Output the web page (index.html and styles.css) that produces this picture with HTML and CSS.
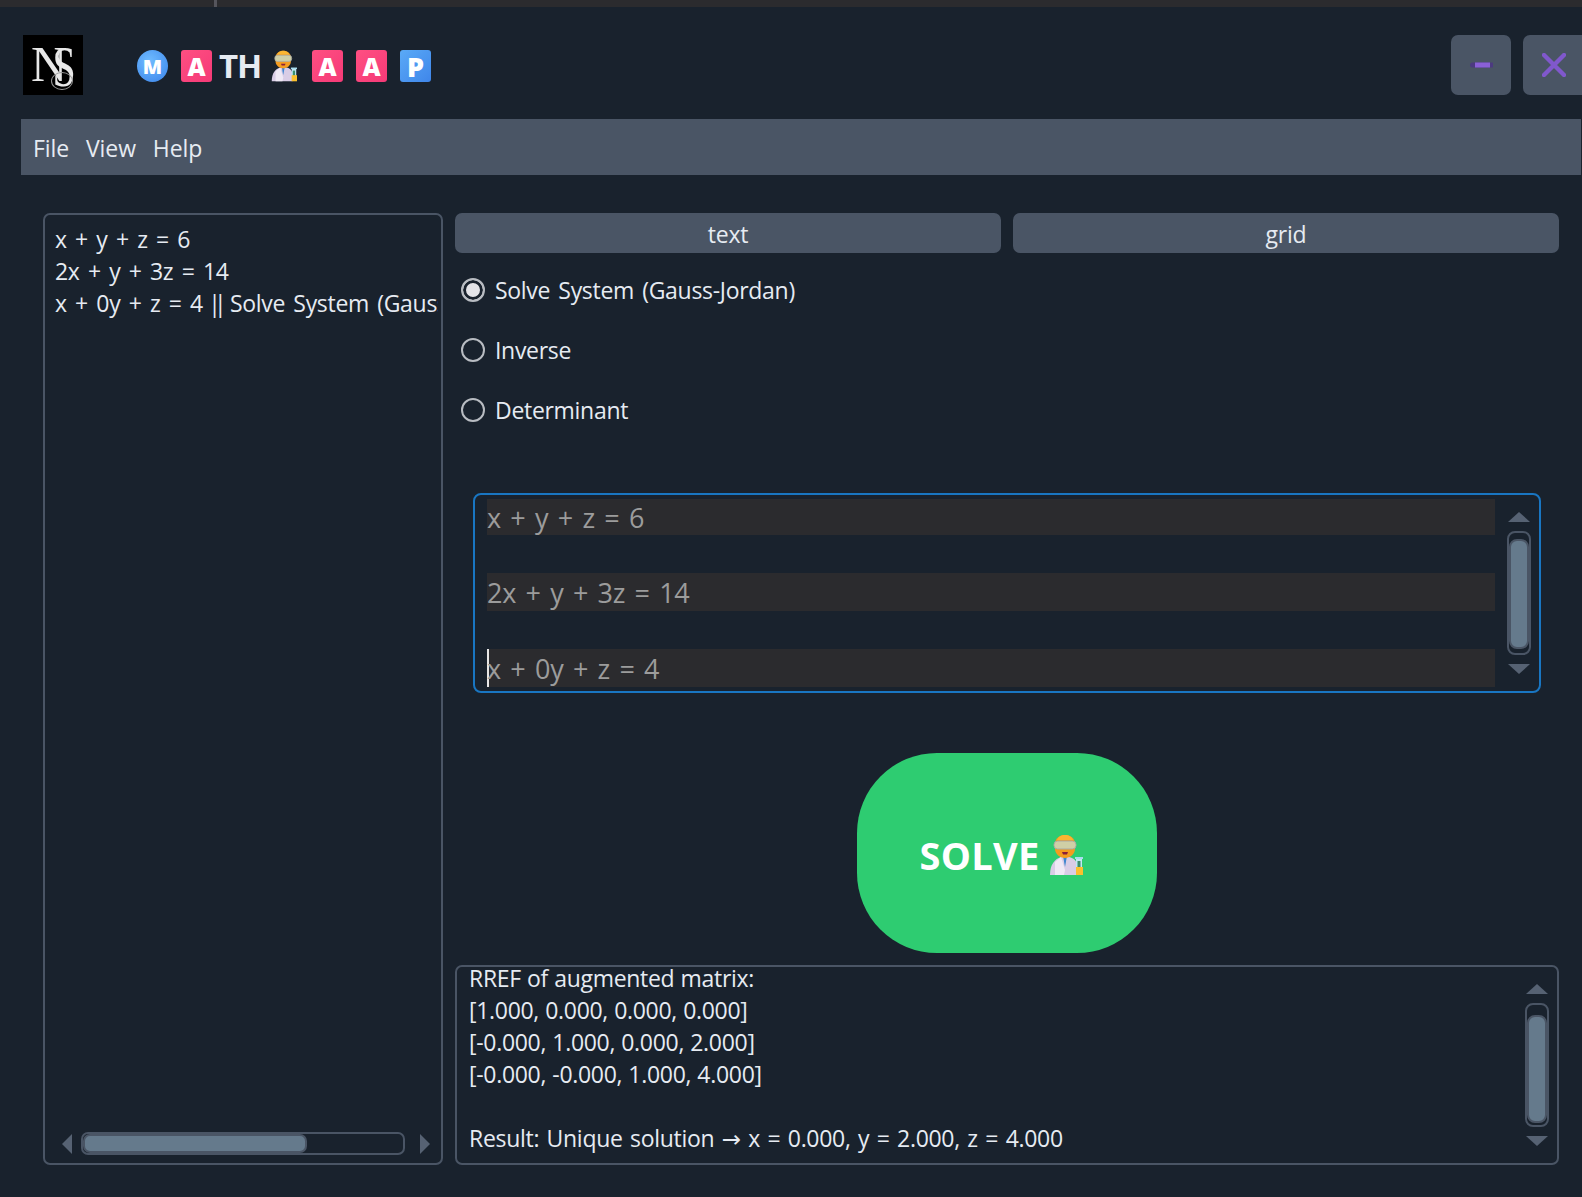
FILE: index.html
```html
<!DOCTYPE html>
<html lang="en">
<head>
  <meta charset="UTF-8"/>
  <title>Math App</title>
  <link rel="stylesheet" href="styles.css">
</head>
<body>

  <!-- shared scientist emoji -->
  <svg class="defs" width="0" height="0">
    <symbol id="scientist" viewBox="0 0 34 40">
      <path d="M1 40 C1 29 6 24 12 22 L20 22 C25 23 28 26 28 31 L28 40 Z" fill="#d9cde6"/>
      <path d="M12 22 L16 35 L15 40 L6 40 L6 27 Z" fill="#efe9f5"/>
      <path d="M14 21 L16 32 L18 21 Z" fill="#3f86cf"/>
      <path d="M6 9 C6 3 11 0 16 0 C21 0 26 3 26 9 L26 14 C26 19 21 23 16 23 C11 23 6 19 6 14 Z" fill="#f59c1f"/>
      <path d="M8 5 C9 2 12 0 16 0 C20 0 23 2 24 5 Z" fill="#fbb531"/>
      <rect x="5" y="6" width="22" height="8" rx="3.5" fill="#cfcfa6" stroke="#a9a9a2"/>
      <path d="M13 17 L19 17 L18 19.5 L14 19.5 Z" fill="#8c1f3a"/>
      <rect x="27" y="23" width="6" height="12" fill="#bfe7f3"/>
      <rect x="28.5" y="26" width="3" height="7" fill="#3d8f6e"/>
      <rect x="26" y="22" width="8" height="2" fill="#a9dcef"/>
      <rect x="27" y="32" width="7" height="8" fill="#fbc02d"/>
    </symbol>
  </svg>

  <div class="top-strip"><span class="tick"></span></div>

  <header class="title-bar">
    <div class="logo">
      <span class="logo-n">N</span><span class="logo-s">S</span><span class="logo-loop"></span>
    </div>
    <div class="app-name">
      <span class="tile tile-round">M</span>
      <span class="tile tile-pink">A</span>
      <span class="plain">TH</span>
      <svg class="scientist"><use href="#scientist"/></svg>
      <span class="tile tile-pink">A</span>
      <span class="tile tile-pink">A</span>
      <span class="tile tile-blue">P</span>
    </div>
    <div class="window-btns">
      <button class="win-btn">
        <svg viewBox="0 0 24 24" width="24" height="24">
          <path d="M3.5 12 H22.5" stroke="#4c3a80" stroke-width="5" stroke-linecap="round"/>
          <path d="M6 12 H21" stroke="#8a60d6" stroke-width="5"/>
        </svg>
      </button>
      <button class="win-btn win-close">
        <svg viewBox="0 0 24 24" width="24" height="24"><path d="M2 2 L22 22 M22 2 L2 22" stroke="#8058cc" stroke-width="4.4" stroke-linecap="round"/></svg>
      </button>
    </div>
  </header>

  <nav class="menu-bar">
    <a>File</a>
    <a>View</a>
    <a>Help</a>
  </nav>

  <main class="content">
    <section class="history">
      <div class="history-text">
        <p>x + y + z = 6</p>
        <p>2x + y + 3z = 14</p>
        <p>x + 0y + z = 4 <span class="pipes">||</span> <span class="history-mode">Solve System (Gauss-Jordan)</span></p>
      </div>
      <div class="hscroll">
        <span class="arrow arrow-left"></span>
        <div class="htrack"><div class="hthumb"></div></div>
        <span class="arrow arrow-right"></span>
      </div>
    </section>

    <section class="workspace">
      <div class="tabs">
        <button class="tab">text</button>
        <button class="tab">grid</button>
      </div>

      <div class="modes">
        <label class="mode"><span class="radio radio-on"></span>Solve System (Gauss-Jordan)</label>
        <label class="mode"><span class="radio"></span>Inverse</label>
        <label class="mode"><span class="radio"></span>Determinant</label>
      </div>

      <div class="editor">
        <div class="editor-lines">
          <div class="line line-first">x + y + z = 6</div>
          <div class="line">2x + y + 3z = 14</div>
          <div class="line line-caret">x + 0y + z = 4</div>
        </div>
        <div class="vscroll">
          <span class="arrow arrow-up"></span>
          <div class="vtrack"><div class="vthumb"></div></div>
          <span class="arrow arrow-down"></span>
        </div>
      </div>

      <button class="solve-btn">SOLVE
        <svg class="scientist-big"><use href="#scientist"/></svg>
      </button>

      <div class="output">
        <div class="output-text">
          <p>RREF of augmented matrix:</p>
          <p>[1.000, 0.000, 0.000, 0.000]</p>
          <p>[-0.000, 1.000, 0.000, 2.000]</p>
          <p>[-0.000, -0.000, 1.000, 4.000]</p>
          <p>&nbsp;</p>
          <p class="result">Result: Unique solution <span class="arrow-glyph">→</span> x = 0.000, y = 2.000, z = 4.000</p>
        </div>
        <div class="vscroll vscroll-output">
          <span class="arrow arrow-up"></span>
          <div class="vtrack"><div class="vthumb"></div></div>
          <span class="arrow arrow-down"></span>
        </div>
      </div>
    </section>
  </main>

</body>
</html>
```
FILE: styles.css
```css
* {
  margin: 0; padding: 0;
  box-sizing: border-box;
  font-family: 'Open Sans', 'Noto Sans', sans-serif;
}

html, body {
  width: 1582px;
  height: 1197px;
  overflow: hidden;
}

body {
  background: #19222d;
  color: #e6ebf2;
}

.defs {
  position: absolute;
}

.top-strip {
  height: 7px;
  background: #2b2b2e;
  padding-left: 214px;
}

.tick {
  display: block;
  width: 3px;
  height: 7px;
  background: #55555c;
}

/* title bar */
.title-bar {
  height: 112px;
  padding: 28px 0 0 23px;
  display: flex;
  align-items: flex-start;
}

.logo {
  width: 60px;
  height: 60px;
  background: #000;
  color: #e8e8e8;
  position: relative;
  overflow: hidden;
}

.logo-n, .logo-s {
  position: absolute;
  font-family: 'Liberation Serif', serif;
}

.logo-n {
  left: 8px;
  top: 3px;
  font-size: 50px;
  line-height: 52px;
}

.logo-s {
  left: 25px;
  top: 4px;
  font-size: 58px;
  line-height: 56px;
  transform: scaleX(0.72);
}

.logo-loop {
  position: absolute;
  left: 28px;
  top: 37px;
  width: 22px;
  height: 18px;
  border: 1px solid #999;
  border-radius: 50%;
}

.app-name {
  display: flex;
  align-items: center;
  margin: 15px 0 0 54px;
  height: 32px;
}

.tile {
  width: 31px;
  height: 32px;
  margin-right: 13px;
  flex-shrink: 0;
  display: flex;
  align-items: center;
  justify-content: center;
  color: #fff;
  font-weight: 800;
  font-size: 25px;
  border-radius: 3px;
}

.tile-round {
  border-radius: 50%;
  background: radial-gradient(circle at 40% 35%, #6fbcff, #3a83ea);
  font-size: 20px;
}

.tile-pink {
  background: linear-gradient(135deg, #ff4f82, #f53a77);
}

.tile-blue {
  background: linear-gradient(135deg, #5aaaf7, #3f86ea);
  font-size: 27px;
  margin-right: 0;
}

.plain {
  font-size: 33px;
  font-weight: 700;
  width: 41px;
  flex-shrink: 0;
  margin: 0 11px 0 -6px;
  line-height: 32px;
  letter-spacing: -1px;
  white-space: nowrap;
}

.scientist {
  width: 26px;
  height: 32px;
  flex-shrink: 0;
  margin-right: 15px;
}

.window-btns {
  margin-left: auto;
  display: flex;
  gap: 12px;
}

.win-btn {
  width: 60px;
  height: 60px;
  background: #4a5565;
  border: none;
  border-radius: 7px;
  display: flex;
  align-items: center;
  justify-content: center;
}

.win-close {
  width: 59px;
  padding-left: 3px;
  border-radius: 7px 0 0 7px;
}

/* menu */
.menu-bar {
  margin: 0 1px 0 21px;
  height: 56px;
  background: #4a5565;
  display: flex;
  align-items: center;
  padding: 2px 0 0 12px;
  gap: 17px;
}

.menu-bar a {
  font-size: 23px;
  letter-spacing: -0.1px;
}

/* main */
.content {
  display: flex;
  gap: 12px;
  padding: 38px 23px 0 43px;
}

.history {
  width: 400px;
  height: 952px;
  border: 2px solid #4a5565;
  border-radius: 7px;
  display: flex;
  flex-direction: column;
  padding: 8px 3px 0 10px;
}

.history-text {
  flex: 1;
  overflow: hidden;
  white-space: nowrap;
  font-size: 23px;
  line-height: 32px;
  letter-spacing: -0.3px;
  word-spacing: 2.7px;
}

.pipes {
  letter-spacing: -7px;
  margin: 0 2px 0 -3px;
}

.history-mode {
  letter-spacing: -0.3px;
  word-spacing: 2.5px;
}

.hscroll {
  display: flex;
  align-items: center;
  height: 23px;
  margin: 0 0 8px 7px;
}

.arrow {
  display: block;
  width: 0;
  height: 0;
  border-style: solid;
  border-color: transparent;
}

.arrow-left {
  border-width: 10px 10px 10px 0;
  border-right-color: #566273;
  margin-right: 9px;
}

.arrow-right {
  border-width: 10px 0 10px 10px;
  border-left-color: #566273;
  margin-left: 15px;
}

.htrack {
  width: 324px;
  height: 23px;
  border: 2px solid #4a5565;
  border-radius: 7px;
  position: relative;
}

.hthumb {
  position: absolute;
  left: 0;
  top: 0;
  width: 224px;
  height: 19px;
  background: #657a8c;
  border: 2px solid #4a5565;
  border-radius: 7px;
}

.workspace {
  width: 1104px;
  height: 952px;
  display: flex;
  flex-direction: column;
}

.tabs {
  display: flex;
  gap: 12px;
}

.tab {
  flex: 1;
  height: 40px;
  padding-top: 2px;
  background: #4a5565;
  border: none;
  border-radius: 7px;
  color: #e6ebf2;
  font-size: 23px;
  letter-spacing: -0.2px;
}

.modes {
  display: flex;
  flex-direction: column;
  gap: 30px;
  margin: 22px 0 0 6px;
}

.mode {
  height: 30px;
  display: flex;
  align-items: center;
  font-size: 23px;
  letter-spacing: -0.3px;
  word-spacing: 2.5px;
}

.radio {
  width: 24px;
  height: 24px;
  border: 2px solid #b8bcc2;
  border-radius: 50%;
  margin-right: 10px;
  background: #19222d;
}

.radio-on {
  background: #e4e4e8;
  box-shadow: inset 0 0 0 3px #19222d;
}

/* editor */
.editor {
  width: 1068px;
  height: 200px;
  margin: 68px 0 0 18px;
  border: 2px solid #1976c2;
  border-radius: 8px;
  display: flex;
  padding: 4px 8px 0 12px;
}

.editor-lines {
  width: 1008px;
  flex-shrink: 0;
  display: flex;
  flex-direction: column;
  gap: 38px;
  color: #9c9c9c;
  font-size: 27px;
  letter-spacing: -0.3px;
  word-spacing: 2.8px;
}

.line {
  height: 38px;
  line-height: 40px;
  background: #2b2b2e;
}

.line-first {
  height: 36px;
  line-height: 38px;
}

.line-caret {
  box-shadow: inset 2px 0 0 #e6e6e6;
}

.vscroll {
  width: 24px;
  flex-shrink: 0;
  margin-left: 12px;
  display: flex;
  flex-direction: column;
  align-items: center;
  padding-top: 13px;
}

.arrow-up {
  border-width: 0 11px 10px;
  border-bottom-color: #566273;
}

.arrow-down {
  border-width: 10px 11px 0;
  border-top-color: #566273;
}

.vtrack {
  width: 24px;
  height: 124px;
  margin: 9px 0;
  border: 2px solid #4a5565;
  border-radius: 8px;
  padding-top: 6px;
}

.vthumb {
  width: 20px;
  height: 110px;
  background: #657a8c;
  border: 2px solid #4a5565;
  border-radius: 8px;
}

/* solve */
.solve-btn {
  width: 300px;
  height: 200px;
  margin: 60px 0 0 402px;
  padding: 4px 12px 0 0;
  background: #2ecc71;
  border: none;
  border-radius: 80px;
  color: #fff;
  font-size: 38px;
  font-weight: 700;
  letter-spacing: 0.3px;
  display: flex;
  align-items: center;
  justify-content: center;
  gap: 9px;
}

.scientist-big {
  width: 34px;
  height: 40px;
}

/* output */
.output {
  height: 200px;
  margin-top: 12px;
  border: 2px solid #4a5565;
  border-radius: 7px;
  display: flex;
  overflow: hidden;
  padding-left: 12px;
}

.output-text {
  flex: 1;
  font-size: 23px;
  line-height: 32px;
  letter-spacing: -0.3px;
  word-spacing: 0.5px;
  margin-top: -5px;
}

.result {
  word-spacing: 1.8px;
}

.arrow-glyph {
  font-family: 'DejaVu Sans', sans-serif;
}

.vscroll-output {
  margin: 0 8px 0 0;
  padding-top: 17px;
}

.vscroll-output .vtrack {
  height: 124px;
  padding-top: 10px;
}

.vscroll-output .vthumb {
  height: 108px;
}
```
